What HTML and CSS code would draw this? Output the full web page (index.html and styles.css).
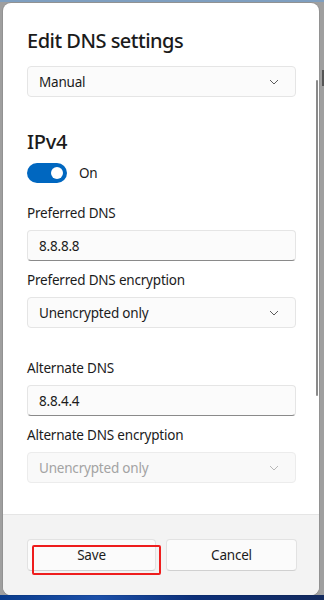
FILE: index.html
```html
<!DOCTYPE html>
<html lang="en">
<head>
  <meta charset="UTF-8">
  <meta name="viewport" content="width=device-width, initial-scale=1.0">
  <title>Edit DNS settings</title>
  <link rel="stylesheet" href="styles.css">
</head>
<body>
  <div class="desktop">
    <div class="dialog">
      <div class="content">
        <h1 class="title">Edit DNS settings</h1>

        <!-- mode select -->
        <div class="select">
          <span>Manual</span>
          <svg class="chevron" width="10" height="6" viewBox="0 0 10 6"><path d="M1 1l4 4 4-4" fill="none" stroke="#5c5c5c" stroke-width="1"/></svg>
        </div>

        <h2 class="section">IPv4</h2>
        <div class="toggle-row">
          <span class="toggle"><span class="knob"></span></span>
          <span class="toggle-label">On</span>
        </div>

        <div class="field">
          <label class="label">Preferred DNS</label>
          <div class="input">8.8.8.8</div>
        </div>
        <div class="field">
          <label class="label">Preferred DNS encryption</label>
          <div class="select">
            <span>Unencrypted only</span>
            <svg class="chevron" width="10" height="6" viewBox="0 0 10 6"><path d="M1 1l4 4 4-4" fill="none" stroke="#5c5c5c" stroke-width="1"/></svg>
          </div>
        </div>

        <div class="field spaced">
          <label class="label">Alternate DNS</label>
          <div class="input">8.8.4.4</div>
        </div>
        <div class="field">
          <label class="label">Alternate DNS encryption</label>
          <div class="select disabled">
            <span>Unencrypted only</span>
            <svg class="chevron" width="10" height="6" viewBox="0 0 10 6"><path d="M1 1l4 4 4-4" fill="none" stroke="#b8b8b8" stroke-width="1"/></svg>
          </div>
        </div>

        <div class="scrollbar"></div>
      </div>

      <div class="footer">
        <div class="btn-wrap">
          <button class="btn">Save</button>
          <!-- highlight box drawn over the Save button -->
          <span class="highlight"></span>
        </div>
        <button class="btn">Cancel</button>
      </div>
    </div>
    <div class="edge"><span class="edge-mark"></span></div>
  </div>
  <div class="taskbar"></div>
</body>
</html>
```

FILE: styles.css
```css
body {
  margin: 0;
  padding: 0;
  background-color: #9f9f9f;
  font-family: "Segoe UI", "Noto Sans", sans-serif;
  color: #1b1b1b;
  width: 324px;
  height: 600px;
  overflow: hidden;
}

.desktop {
  display: flex;
  height: 595px;
  padding: 3px 0 0 3px;
  box-sizing: border-box;
  background: linear-gradient(#7f9fc0 0, #7f9fc0 2px, #9f9f9f 2px);
}

.dialog {
  width: 316px;
  height: 592px;
  background-color: #fff;
  border-radius: 8px;
  overflow: hidden;
  display: flex;
  flex-direction: column;
  box-shadow: 0 0 0 1px rgba(0,0,0,0.08);
}

.content {
  position: relative;
  flex: 1;
  padding: 24px 23px 0 24px;
  font-size: 13.5px;
  letter-spacing: -0.2px;
}

.title {
  margin: 0 0 11px 0;
  font-size: 20px;
  line-height: 28px;
  font-weight: 500;
  letter-spacing: -0.5px;
}

.section {
  margin: 31px 0 7px 0;
  font-size: 20px;
  line-height: 28px;
  font-weight: 500;
  letter-spacing: -0.3px;
}

.select,
.input {
  height: 31px;
  box-sizing: border-box;
  border: 1px solid #e5e5e5;
  border-radius: 4px;
  background-color: #fbfbfb;
  display: flex;
  align-items: center;
  justify-content: space-between;
  padding: 0 16px 0 11px;
}

.input {
  border-bottom: 1px solid #8a8a8a;
}

.select.disabled {
  background-color: #f9f9f9;
  border-color: #ececec;
  color: #a3a3a3;
}

.chevron {
  display: block;
}

.toggle-row {
  display: flex;
  align-items: center;
  gap: 12px;
}

.toggle {
  width: 40px;
  height: 20px;
  border-radius: 10px;
  background-color: #0067c0;
  display: flex;
  align-items: center;
  justify-content: flex-end;
  padding-right: 4px;
  box-sizing: border-box;
}

.knob {
  width: 12px;
  height: 12px;
  border-radius: 50%;
  background-color: #fff;
}

.field {
  margin-top: 9px;
}

.toggle-row + .field {
  margin-top: 20px;
}

.field.spaced {
  margin-top: 30px;
}

.label {
  display: block;
  line-height: 20px;
  margin-bottom: 7px;
}

.scrollbar {
  position: absolute;
  right: 1px;
  top: 77px;
  width: 2px;
  height: 316px;
  background-color: #8a8a8a;
  border-radius: 1px;
}

.footer {
  height: 81px;
  background-color: #f3f3f3;
  border-top: 1px solid #e5e5e5;
  display: flex;
  gap: 10px;
  padding: 24px 22px 0 24px;
  box-sizing: border-box;
}

.btn-wrap {
  position: relative;
  flex: 1;
  display: flex;
}

.btn {
  flex: 1;
  height: 32px;
  border: 1px solid #e2e2e2;
  border-bottom-color: #d0d0d0;
  border-radius: 4px;
  background-color: #fbfbfb;
  font-family: "Segoe UI", "Noto Sans", sans-serif;
  font-size: 13.5px;
  letter-spacing: -0.2px;
  color: #1b1b1b;
  padding: 0;
}

.highlight {
  position: absolute;
  left: 5px;
  top: 6px;
  width: 129px;
  height: 30px;
  border: 2px solid #ee1d1d;
  border-radius: 2px;
  box-sizing: border-box;
}

.edge {
  flex: 1;
  position: relative;
}

.edge-mark {
  position: absolute;
  right: 0;
  top: 67px;
  width: 2px;
  height: 16px;
  background-color: #555;
}

.taskbar {
  height: 5px;
  background: linear-gradient(90deg, #0a3c8c, #1b4fa8 30%, #0c2f78 60%, #132a5e);
}
```
